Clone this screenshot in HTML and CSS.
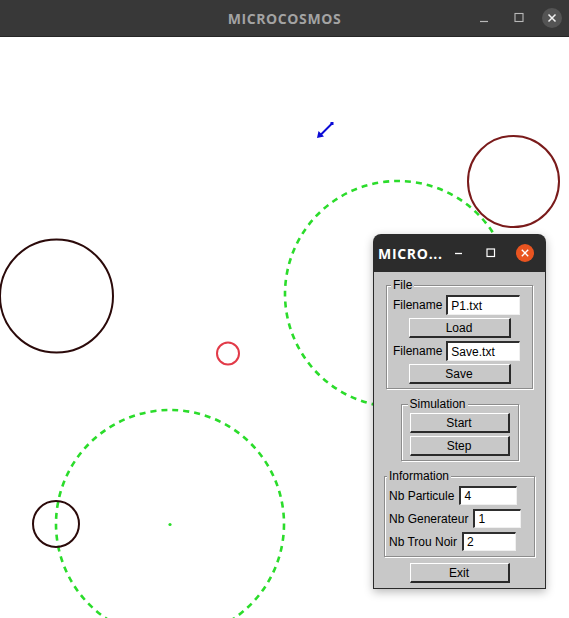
FILE: index.html
```html
<!DOCTYPE html>
<html>
<head>
<meta charset="utf-8">
<link rel="stylesheet" href="styles.css">
</head>
<body>
<div class="app">
  <header class="titlebar">
    <span></span>
    <span class="title">MICROCOSMOS</span>
    <div class="controls">
      <span class="ctl"><svg width="20" height="20" viewBox="0 0 20 20"><line x1="6" y1="13.5" x2="14" y2="13.5" stroke="#b8b8b8" stroke-width="1.2"/></svg></span>
      <span class="ctl ctl-max"><svg width="20" height="20" viewBox="0 0 20 20"><rect x="6" y="5.5" width="8" height="8" fill="none" stroke="#b8b8b8" stroke-width="1.1"/></svg></span>
      <span class="ctl ctl-close"><svg width="20" height="20" viewBox="0 0 20 20"><circle cx="10" cy="10" r="10" fill="#545454"/><path d="M6.5 6.5 L13.5 13.5 M13.5 6.5 L6.5 13.5" stroke="#f2f2f2" stroke-width="1.5"/></svg></span>
    </div>
  </header>
  <main class="canvas">
    <svg class="world" width="569" height="581" viewBox="0 37 569 581">
      <circle cx="398" cy="294" r="113" fill="none" stroke="#2bdc2b" stroke-width="2.6" stroke-dasharray="6 5"/>
      <circle cx="170" cy="524" r="114" fill="none" stroke="#2bdc2b" stroke-width="2.6" stroke-dasharray="6 5"/>
      <circle cx="170" cy="524.5" r="1.6" fill="#2bdc2b"/>
      <circle cx="513.5" cy="181.5" r="45.5" fill="none" stroke="#7a1b1b" stroke-width="2"/>
      <circle cx="56.5" cy="296" r="56.5" fill="none" stroke="#2b0a0a" stroke-width="2"/>
      <circle cx="56" cy="524" r="23" fill="none" stroke="#2b0a0a" stroke-width="2"/>
      <circle cx="228" cy="353.5" r="11" fill="none" stroke="#e23a48" stroke-width="2"/>
      <line x1="332" y1="123.5" x2="321" y2="134.5" stroke="#0b0bd6" stroke-width="2"/>
      <polygon points="317,138 318.5,131 324,136.5" fill="#0b0bd6"/>
      <rect x="330.5" y="122" width="3" height="3" fill="#0b0bd6"/>
    </svg>

    <section class="dialog">
      <div class="dlg-title">
        <span class="dlg-name">MICRO...</span>
        <div class="dlg-controls">
          <span class="dctl"><svg width="18" height="18" viewBox="0 0 18 18"><line x1="5" y1="9.5" x2="12" y2="9.5" stroke="#ffffff" stroke-width="1.3"/></svg></span>
          <span class="dctl"><svg width="18" height="18" viewBox="0 0 18 18"><rect x="5" y="5" width="7.5" height="7.5" fill="none" stroke="#ffffff" stroke-width="1.2"/></svg></span>
          <span class="dctl dctl-close"><svg width="18" height="18" viewBox="0 0 18 18"><circle cx="9" cy="9" r="9" fill="#e95420"/><path d="M5.8 5.8 L12.2 12.2 M12.2 5.8 L5.8 12.2" stroke="#ffffff" stroke-width="1.4"/></svg></span>
        </div>
      </div>
      <div class="dlg-body">
        <fieldset class="group group-file">
          <legend>File</legend>
          <div class="row"><span class="lbl">Filename</span><span class="entry entry-file">P1.txt</span></div>
          <div class="btn">Load</div>
          <div class="row"><span class="lbl">Filename</span><span class="entry entry-file">Save.txt</span></div>
          <div class="btn">Save</div>
        </fieldset>
        <fieldset class="group group-sim">
          <legend>Simulation</legend>
          <div class="btn btn-wide">Start</div>
          <div class="btn btn-wide">Step</div>
        </fieldset>
        <fieldset class="group group-info">
          <legend>Information</legend>
          <div class="row"><span class="lbl">Nb Particule</span><span class="entry entry-a">4</span></div>
          <div class="row"><span class="lbl">Nb Generateur</span><span class="entry entry-b">1</span></div>
          <div class="row"><span class="lbl">Nb Trou Noir</span><span class="entry entry-c">2</span></div>
        </fieldset>
        <div class="btn btn-exit">Exit</div>
      </div>
    </section>
  </main>
</div>
</body>
</html>
```
FILE: styles.css
```css
* { box-sizing: border-box; }
html, body { margin: 0; padding: 0; background: #ffffff; }
body { width: 569px; height: 618px; overflow: hidden; font-family: "Liberation Sans", Arial, sans-serif; }

.app { display: flex; flex-direction: column; width: 569px; height: 618px; }

.titlebar {
  height: 37px;
  flex: none;
  background: #383838;
  border-bottom: 1px solid #262626;
  display: grid;
  grid-template-columns: 1fr auto 1fr;
  align-items: center;
}
.title {
  font-family: "Open Sans", "Noto Sans", sans-serif;
  font-weight: 700;
  font-size: 14px;
  letter-spacing: 0.6px;
  color: #a3a3a3;
  padding-top: 1px;
}
.controls { justify-self: end; display: flex; align-items: center; padding-right: 7px; }
.ctl { width: 20px; height: 20px; display: block; }
.ctl svg { display: block; }
.ctl-max { margin-left: 15px; }
.ctl-close { margin-left: 13px; }

.canvas { position: relative; flex: 1; background: #ffffff; }
.world { display: block; }

.dialog {
  position: absolute;
  left: 373px;
  top: 197px;
  width: 173px;
  display: flex;
  flex-direction: column;
  box-shadow: 0 3px 10px rgba(0,0,0,0.28);
  border-radius: 8px 8px 0 0;
}
.dlg-title {
  height: 38px;
  background: #2c2c2c;
  border-radius: 8px 8px 0 0;
  display: flex;
  align-items: center;
  padding: 0 12px 0 5px;
}
.dlg-name {
  flex: 1 1 0;
  min-width: 0;
  white-space: nowrap;
  font-family: "Open Sans", "Noto Sans", sans-serif;
  font-weight: 700;
  font-size: 14px;
  letter-spacing: 0.7px;
  color: #ffffff;
}
.dlg-controls { flex: none; display: flex; align-items: center; }
.dctl { width: 18px; height: 18px; display: block; margin-left: 14px; }
.dctl svg { display: block; }
.dctl-close { margin-left: 16px; }

.dlg-body {
  background: #c8c8c8;
  border: 1px solid #2a2a2a;
  border-top: none;
  display: flex;
  flex-direction: column;
  align-items: center;
  padding: 6px 0 5px;
  font-size: 12px;
  color: #000000;
}

.group {
  margin: 0;
  border: 1px solid #8c8c8c;
  box-shadow: inset 1px 1px 0 #ffffff, 1px 1px 0 #ffffff;
  display: flex;
  flex-direction: column;
  min-width: 0;
}
.group legend {
  font-size: 12px;
  line-height: 14px;
  padding: 0 2px;
  margin-left: -2px;
  background: #c8c8c8;
}
.group-file { width: 147px; padding: 3px 0 4px 6px; gap: 3px; }
.group-sim { width: 118px; margin-top: 8px; padding: 2px 0 4px 8px; gap: 3px; }
.group-info { width: 151px; margin-top: 8px; padding: 3px 0 5px 4px; gap: 4px; }

.row { display: flex; align-items: center; gap: 4px; height: 20px; }
.group-info .row { height: 19px; gap: 5px; }
.lbl { white-space: nowrap; line-height: 14px; }

.entry {
  height: 100%;
  background: #ffffff;
  border-style: solid;
  border-width: 2px 1px 1px 2px;
  border-color: #2e2e2e #f0f0f0 #f0f0f0 #2e2e2e;
  padding: 0 3px;
  display: flex;
  align-items: center;
  font-size: 12px;
}
.entry-file { width: 74px; }
.entry-a { width: 58px; }
.entry-b { width: 48px; }
.entry-c { width: 54px; }

.btn {
  align-self: center;
  width: 102px;
  height: 20px;
  border-style: solid;
  border-width: 1px 2px 2px 1px;
  border-color: #ffffff #2a2a2a #2a2a2a #ffffff;
  background: #c8c8c8;
  display: flex;
  align-items: center;
  justify-content: center;
  font-size: 12px;
  margin-left: -6px;
}
.group-sim .btn { width: 100px; margin-left: -8px; }
.btn-exit { width: 100px; height: 20px; margin-top: 6px; margin-left: 0; }
```
